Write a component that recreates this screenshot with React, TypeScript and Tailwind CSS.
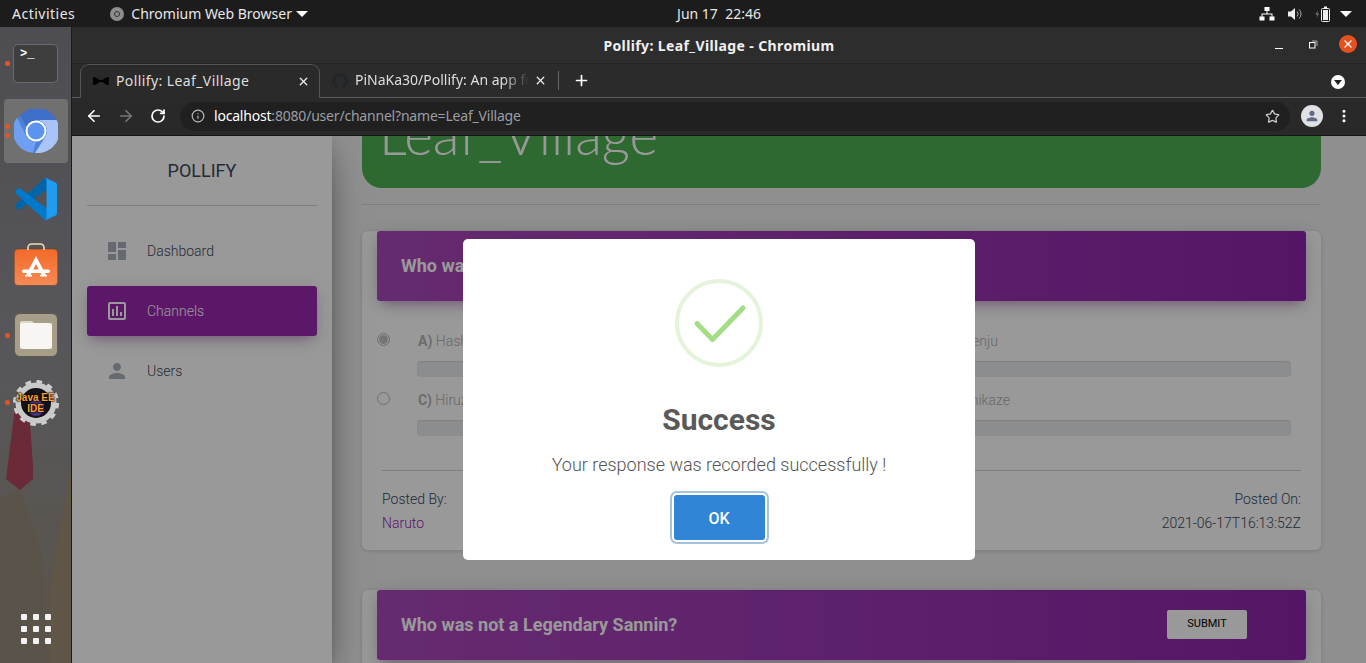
import { ArrowLeft, ArrowRight, Info, MoreVertical, Plus, RotateCw, Star, X } from "lucide-react";
import { FaGithub } from "react-icons/fa";
import type { ReactNode } from "react";

const CHROME_FONT = "font-['Noto_Sans',sans-serif]";

function TopBar() {
  return (
    <div className={`flex h-[27px] shrink-0 items-center bg-[#1c1c1c] text-[14px] text-[#e8e8e8] relative ${CHROME_FONT}`}>
      <span className="ml-[12px] tracking-[0.5px]">Activities</span>
      <span className="ml-[35px] flex h-[14px] w-[14px] items-center justify-center rounded-full bg-[#8d8d8d]">
        <span className="h-[6px] w-[6px] rounded-full border border-[#333]" />
      </span>
      <span className="ml-[7px]">Chromium Web Browser</span>
      <span className="ml-[4px] h-0 w-0 border-x-[6px] border-t-[6px] border-x-transparent border-t-white" />
      <span className="absolute left-1/2 -translate-x-1/2 pl-[72px] whitespace-pre">Jun 17  22:46</span>
      <div className="ml-auto mr-[14px] flex items-center">
        <svg width="16" height="14" viewBox="0 0 16 14" fill="white">
          <rect x="5.5" y="0" width="5" height="4" />
          <rect x="0.5" y="9.5" width="5" height="4" />
          <rect x="10.5" y="9.5" width="5" height="4" />
          <path d="M7.5 4h1v2.5h5V10h-1V7.5h-9V10h-1V6.5h5z" />
        </svg>
        <svg className="ml-[13px]" width="15" height="14" viewBox="0 0 15 14" fill="none">
          <path d="M0 4.5h3L7 1v12L3 9.5H0z" fill="#eee" />
          <path d="M9 4.5a3.5 3.5 0 0 1 0 5M11 2.5a6 6 0 0 1 0 9" stroke="#aaa" />
        </svg>
        <svg className="ml-[12px]" width="16" height="16" viewBox="0 0 16 16" fill="none">
          <path d="M3 4 0.5 8.5H2.5L1.5 12 4 7.5H2z" fill="#888" />
          <rect x="6.5" y="2.5" width="8" height="13" rx="1" stroke="#eee" />
          <rect x="8" y="4" width="5" height="10" fill="#eee" />
          <rect x="9" y="0.5" width="3" height="2" fill="#eee" />
        </svg>
        <span className="ml-[9px] h-0 w-0 border-x-[6px] border-t-[6px] border-x-transparent border-t-white" />
      </div>
    </div>
  );
}

function Dot({ top }: { top: string }) {
  return <span className={`absolute left-[5px] h-[5px] w-[5px] rounded-full bg-[#e95420] ${top}`} />;
}

function ChromiumLogo() {
  return (
    <svg width="44" height="44" viewBox="0 0 44 44">
      <circle cx="22" cy="22" r="22" fill="#4d82d8" />
      <path d="M22 11h20.5A22 22 0 0 0 6 6.8l8 13A11 11 0 0 1 22 11z" fill="#3f6fc9" />
      <path d="M22 33a11 11 0 0 1-9.5-5.5L3 8.8A22 22 0 0 0 19 43.8z" fill="#6e9ff0" />
      <path d="M22 11h20.5A22 22 0 0 1 21 44l10.5-16.5A11 11 0 0 0 22 11z" fill="#a9c5f7" />
      <circle cx="22" cy="22" r="10.5" fill="white" />
      <circle cx="22" cy="22" r="8.5" fill="#5b93ee" />
    </svg>
  );
}

function VsCodeLogo() {
  return (
    <svg width="42" height="42" viewBox="0 0 100 100">
      <path d="M96.46 10.8 75.86.9a6.23 6.23 0 0 0-7.1 1.2L1.3 63.7a4.16 4.16 0 0 0 0 6.2l5.5 5a4.16 4.16 0 0 0 5.3.2L93.4 13.5a4.13 4.13 0 0 1 6.6 3.3v-.2a6.25 6.25 0 0 0-3.54-5.8z" fill="#0065A9" />
      <path d="M96.46 89.2 75.86 99.1a6.23 6.23 0 0 1-7.1-1.2L1.3 36.3a4.16 4.16 0 0 1 0-6.2l5.5-5a4.16 4.16 0 0 1 5.3-.2l81.3 61.6a4.13 4.13 0 0 0 6.6-3.3v.2a6.25 6.25 0 0 1-3.54 5.8z" fill="#007ACC" />
      <path d="M75.86 99.1a6.23 6.23 0 0 1-7.1-1.2c2.3 2.3 6.24.67 6.24-2.6V4.7c0-3.27-3.94-4.9-6.24-2.6a6.23 6.23 0 0 1 7.1-1.2l20.6 9.9A6.25 6.25 0 0 1 100 16.4v67.2a6.25 6.25 0 0 1-3.54 5.6z" fill="#1F9CF0" />
    </svg>
  );
}

function SoftwareLogo() {
  return (
    <svg width="44" height="43" viewBox="0 0 44 43">
      <defs>
        <linearGradient id="sw" x1="0" y1="0" x2="0" y2="1">
          <stop offset="0" stopColor="#f26a2a" />
          <stop offset="1" stopColor="#f68a55" />
        </linearGradient>
      </defs>
      <rect x="0.25" y="6" width="43.5" height="36.5" rx="4" fill="url(#sw)" stroke="#5a3a2a" strokeWidth="0.5" />
      <path d="M14 7V4.5a3.5 3.5 0 0 1 3.5-3.5h9a3.5 3.5 0 0 1 3.5 3.5V7" fill="none" stroke="#efdcb0" strokeWidth="1.6" />
      <path d="M22 13 L12 32 H16.5 L22 21 L27.5 32 H32 Z" fill="white" />
      <rect x="8" y="26.5" width="28" height="3.5" rx="1.75" fill="white" />
      <rect x="11" y="32" width="7" height="1.5" fill="white" />
      <rect x="26" y="32" width="7" height="1.5" fill="white" />
    </svg>
  );
}

function FilesLogo() {
  return (
    <div className="flex h-[44px] w-[44px] items-center justify-center rounded-[6px] border border-[#5f5a4c] bg-[#a69e89]">
      <svg width="32" height="28" viewBox="0 0 32 28">
        <path d="M2 0h10l3 3H0V2a2 2 0 0 1 2-2z" fill="#dcd8cc" />
        <path d="M2 2h28a2 2 0 0 1 2 2v22a2 2 0 0 1-2 2H2a2 2 0 0 1-2-2V4a2 2 0 0 1 2-2z" fill="#f8f6f2" />
      </svg>
    </div>
  );
}

function EclipseLogo() {
  return (
    <div className="relative flex h-[46px] w-[46px] items-center justify-center">
      <svg className="absolute inset-0" width="46" height="46" viewBox="0 0 46 46">
        <circle cx="23" cy="23" r="21.5" fill="none" stroke="#cfcfcf" strokeWidth="3" strokeDasharray="5.6 5.65" />
        <circle cx="23" cy="23" r="17.5" fill="none" stroke="#c9c9c9" strokeWidth="6" />
        <circle cx="23" cy="23" r="15" fill="#141218" />
        <circle cx="23" cy="28" r="8" fill="#4a3580" />
      </svg>
      <span className="relative text-center text-[10px] leading-[11px] font-bold text-[#ffa030] [text-shadow:0_0_2px_#000,0_0_2px_#000,0_0_1px_#000] font-['Liberation_Sans',sans-serif] whitespace-nowrap">
        Java EE
        <br />
        IDE
      </span>
    </div>
  );
}

function Dock() {
  return (
    <div className="relative flex w-[72px] shrink-0 flex-col overflow-hidden border-r border-[#1a1a1a] bg-gradient-to-b from-[#4e4e52] via-[#57575b] to-[#5a5449] pt-[2px]">
      {/* wallpaper bits showing through the dock */}
      <svg className="absolute inset-0" width="71" height="636" viewBox="0 0 71 636">
        <path d="M15 380 L22 385 L29 380 L33 440 L33 452 L20 463 L6 452 Z" fill="#6a2a38" />
        <path d="M0 470 L20 463 L40 520 L50 636 L0 636 Z" fill="#5a5349" />
        <path d="M71 440 L50 560 L50 636 L71 636 Z" fill="#5f5648" />
      </svg>
      <div className="relative flex h-[68px] items-center justify-center">
        <Dot top="top-[32px]" />
        <div className="h-[39px] w-[45px] rounded-[5px] border border-[#6a6a6a] bg-[#3e3e3e] px-[6px] pt-[1px] font-['Liberation_Mono',monospace] text-[12px] leading-[16px] font-bold text-white">
          &gt;_
        </div>
      </div>
      <div className="relative flex h-[68px] items-center justify-center">
        <div className="flex h-[64px] w-[64px] items-center justify-center rounded-[4px] bg-[#707070]">
          <ChromiumLogo />
        </div>
        <Dot top="top-[27px]" />
        <Dot top="top-[36px]" />
      </div>
      <div className="relative flex h-[68px] items-center justify-center">
        <VsCodeLogo />
      </div>
      <div className="relative flex h-[68px] items-center justify-center pb-[5px]">
        <SoftwareLogo />
      </div>
      <div className="relative flex h-[68px] items-center justify-center">
        <Dot top="top-[32px]" />
        <FilesLogo />
      </div>
      <div className="relative flex h-[68px] items-center justify-center">
        <Dot top="top-[31px]" />
        <EclipseLogo />
      </div>
      <div className="relative mt-auto mb-[19px] grid w-fit grid-cols-3 gap-[6px] self-center">
        {Array.from({ length: 9 }).map((_, i) => (
          <span key={i} className="h-[6px] w-[6px] rounded-[1px] bg-[#f2f2f2]" />
        ))}
      </div>
    </div>
  );
}

function TitleBar() {
  return (
    <div className={`relative flex h-[37px] shrink-0 items-center justify-center border-b border-[#232323] bg-[#2d2d2d] text-[14px] font-bold tracking-[0.38px] text-[#f0f0f0] ${CHROME_FONT}`}>
      Pollify: Leaf_Village - Chromium
      <div className="absolute right-[9px] top-[8px] flex items-center">
        <span className="mt-[8px] h-[1px] w-[8px] bg-white" />
        <svg className="ml-[26px]" width="9" height="9" viewBox="0 0 9 9" fill="none" stroke="white">
          <rect x="0.5" y="2.5" width="5.5" height="5.5" />
          <path d="M3 1h5v5" stroke="#aaa" />
        </svg>
        <span className="ml-[21px] flex h-[18px] w-[18px] items-center justify-center rounded-full bg-[#e6501e]">
          <X size={12} color="white" strokeWidth={2.5} />
        </span>
      </div>
    </div>
  );
}

function TabStrip() {
  return (
    <div className={`flex h-[34px] shrink-0 items-end border-b border-[#5e5e5e] bg-[#2b2b2b] text-[14px] text-[#dedede] ${CHROME_FONT}`}>
      <div className="relative z-10 -mb-px ml-[8px] flex h-[34px] w-[240px] items-center rounded-t-[9px] border-x border-t border-b border-[#555] border-b-[#2a2a2a] bg-[#2a2a2a] pl-[12px]">
        <svg width="16" height="10" viewBox="0 0 16 10" fill="black">
          <path d="M0 1c3 0 5 2 6.5 3h3C11 3 13 1 16 1v8c-3 0-5-2-6.5-3h-3C5 7 3 9 0 9z" />
        </svg>
        <span className="ml-[7px] pb-[2px] tracking-[0.4px]">Pollify: Leaf_Village</span>
        <X className="absolute right-[9px] top-[10px]" size={13} color="#eee" strokeWidth={2.4} />
      </div>
      <div className="relative flex h-[33px] w-[239px] items-center pl-[12px]">
        <FaGithub size={16} color="#20262c" />
        <span className="ml-[7px] w-[174px] overflow-hidden pb-[2px] whitespace-nowrap [mask-image:linear-gradient(to_right,black_85%,transparent)]">
          PiNaKa30/Pollify: An app for
        </span>
        <X className="absolute right-[12px] top-[10px]" size={13} color="#eee" strokeWidth={2.4} />
        <span className="absolute right-0 top-[7px] h-[19px] w-px bg-[#666]" />
      </div>
      <div className="flex h-[33px] items-center pl-[14px]">
        <Plus size={17} color="white" strokeWidth={2.4} />
      </div>
      <span className="mb-[8px] ml-auto mr-[21px] flex h-[14px] w-[14px] items-center justify-center rounded-full bg-white">
        <span className="mt-[1px] h-0 w-0 border-x-[4px] border-t-[5px] border-x-transparent border-t-[#222]" />
      </span>
    </div>
  );
}

function Toolbar() {
  return (
    <div className={`flex h-[38px] shrink-0 items-center border-b border-[#151515] bg-[#292929] pb-[1px] text-[14px] ${CHROME_FONT}`}>
      <ArrowLeft className="ml-[13px]" size={18} color="white" strokeWidth={2.2} />
      <ArrowRight className="ml-[14px]" size={18} color="#777" strokeWidth={2.2} />
      <RotateCw className="ml-[15px]" size={16} color="white" strokeWidth={2.6} />
      <div className="ml-[14px] flex h-[29px] w-[1110px] items-center rounded-full bg-[#202020] pl-[11px]">
        <Info size={14} color="#bbb" />
        <span className="ml-[9px] pb-[2px] tracking-[-0.2px] text-white">localhost</span>
        <span className="pb-[2px] tracking-[-0.2px] text-[#9a9ea4]">:8080/user/channel?name=Leaf_Village</span>
        <Star className="ml-auto mr-[10px]" size={15} color="#ccc" strokeWidth={2} />
      </div>
      <span className="ml-[11px] flex h-[22px] w-[22px] items-center justify-center rounded-full bg-[#dfe1e5]">
        <svg width="16" height="16" viewBox="0 0 24 24" fill="#5f6b80">
          <path d="M12 12c2.21 0 4-1.79 4-4s-1.79-4-4-4-4 1.79-4 4 1.79 4 4 4zm0 2c-2.67 0-8 1.34-8 4v2h16v-2c0-2.66-5.33-4-8-4z" />
        </svg>
      </span>
      <MoreVertical className="ml-[13px]" size={16} color="white" strokeWidth={2.6} />
    </div>
  );
}

function NavItem({ label, active, path }: { label: string; active?: boolean; path: string }) {
  return (
    <div
      className={`mx-[15px] flex h-[50px] items-center rounded-[3px] pl-[18px] text-[14px] font-light ${
        active
          ? "bg-[#9c27b0] text-white shadow-[0_4px_20px_0_rgba(0,0,0,0.14),0_7px_10px_-5px_rgba(156,39,176,0.4)]"
          : "text-[#3c4858]"
      }`}
    >
      <svg width="24" height="24" viewBox="0 0 24 24" fill={active ? "white" : "#a9afbb"} fillRule="evenodd">
        <path d={path} />
      </svg>
      <span className="ml-[18px]">{label}</span>
    </div>
  );
}

function Sidebar() {
  return (
    <div className="relative z-10 w-[260px] shrink-0 bg-white shadow-[0_16px_38px_-12px_rgba(0,0,0,0.56),0_4px_25px_0_rgba(0,0,0,0.12),0_8px_10px_-5px_rgba(0,0,0,0.2)]">
      <div className="mx-[15px] flex h-[70px] items-center justify-center border-b border-[#d2d2d2] text-[18px] text-[#3c4858]">
        POLLIFY
      </div>
      <div className="mt-[20px] flex flex-col gap-[10px]">
        <NavItem label="Dashboard" path="M3 13h8V3H3v10zm0 8h8v-6H3v6zm10 0h8V11h-8v10zm0-18v6h8V3h-8z" />
        <NavItem
          label="Channels"
          active
          path="M19 3H5c-1.1 0-2 .9-2 2v14c0 1.1.9 2 2 2h14c1.1 0 2-.9 2-2V5c0-1.1-.9-2-2-2zm0 16H5V5h14v14zM7 10h2v7H7zm4-3h2v10h-2zm4 6h2v4h-2z"
        />
        <NavItem label="Users" path="M12 12c2.21 0 4-1.79 4-4s-1.79-4-4-4-4 1.79-4 4 1.79 4 4 4zm0 2c-2.67 0-8 1.34-8 4v2h16v-2c0-2.66-5.33-4-8-4z" />
      </div>
    </div>
  );
}

function PollOption({ letter, name, checked }: { letter: string; name: string; checked?: boolean }) {
  return (
    <div className="flex">
      <span className="mt-[2px] flex h-[13px] w-[13px] shrink-0 items-center justify-center rounded-full border border-[#b8b8b8]">
        {checked && <span className="h-[9px] w-[9px] rounded-full bg-[#c4c4c4]" />}
      </span>
      <div className="ml-[27px] flex-1">
        <p className="h-[21px] pl-[1px] text-[14px] leading-[21px] font-light text-[#adadad]">
          <b className="font-bold text-[#b4b4b4]">{letter})</b> {name}
        </p>
        <div className="mt-[9px] h-[16px] rounded-[4px] bg-[#e9ecef] shadow-[inset_0_1px_2px_rgba(0,0,0,0.1)]" />
      </div>
    </div>
  );
}

function CardHeader({ title, children }: { title: string; children?: ReactNode }) {
  return (
    <div className="mx-[15px] -mt-[20px] flex h-[70px] items-center justify-between rounded-[3px] bg-gradient-to-r from-[#ab47bc] to-[#8e24aa] pl-[24px] shadow-[0_4px_20px_0_rgba(0,0,0,0.14),0_7px_10px_-5px_rgba(156,39,176,0.4)]">
      <h4 className="pb-[2px] text-[18px] font-bold text-white">{title}</h4>
      {children}
    </div>
  );
}

function PollCard() {
  return (
    <div className="mt-[46px] rounded-[6px] bg-white shadow-[0_1px_4px_0_rgba(0,0,0,0.14)]">
      <CardHeader title="Who was the First Hokage?" />
      <div className="grid grid-cols-2 gap-x-[20px] gap-y-[13px] pl-[15px] pr-[30px] pt-[30px]">
        <PollOption letter="A" name="Hashirama Senju" checked />
        <PollOption letter="B" name="Tobirama Senju" />
        <PollOption letter="C" name="Hiruzen Sarutobi" />
        <PollOption letter="D" name="Minato Namikaze" />
      </div>
      <div className="mx-[20px] mt-[34px] flex h-[80px] justify-between border-t border-[#d2d2d2] pt-[16px] text-[14px] leading-[24px] font-light text-[#3c4858]">
        <div>
          <p>Posted By:</p>
          <p className="text-[#9c27b0]">Naruto</p>
        </div>
        <div className="text-right">
          <p>Posted On:</p>
          <p>2021-06-17T16:13:52Z</p>
        </div>
      </div>
    </div>
  );
}

function SuccessModal() {
  return (
    <div className="absolute inset-0 z-20 flex items-center justify-center bg-black/40">
      <div className="flex h-[321px] w-[512px] flex-col items-center rounded-[5px] bg-white pt-[40px]">
        <svg width="88" height="88" viewBox="0 0 88 88" fill="none">
          <circle cx="44" cy="44" r="42" stroke="#a5dc86" strokeOpacity="0.3" strokeWidth="4" />
          <path d="M22 44.5L37.5 60.5L68 29" stroke="#a5dc86" strokeWidth="5" strokeLinecap="round" strokeLinejoin="round" />
        </svg>
        <h2 className="mt-[33px] text-[30px] leading-[40px] font-bold text-[#595959]">Success</h2>
        <p className="mt-[15px] text-[18px] leading-[20px] font-light text-[#545454]">
          Your response was recorded successfully !
        </p>
        <button className="mt-[20px] h-[45px] w-[91px] rounded-[3px] bg-[#3085d6] pt-[2px] text-[16px] font-medium text-white shadow-[0_0_0_2px_#fff,0_0_0_4px_#a9c1da]">
          OK
        </button>
      </div>
    </div>
  );
}

function Page() {
  return (
    <div className="relative flex min-h-0 flex-1 overflow-hidden bg-[#eeeeee] font-['Roboto',sans-serif]">
      <Sidebar />
      <div className="min-w-0 flex-1 pl-[30px] pr-[45px]">
        <div className="flex h-[52px] items-end overflow-hidden rounded-b-[20px] bg-[#4caf50] pl-[17px]">
          <span className="pb-[26px] font-['Lato',sans-serif] text-[55px] leading-[55px] font-light whitespace-nowrap text-white">
            Leaf_Village
          </span>
        </div>
        <div className="mt-[16px] border-t border-[#d2d2d2]" />
        <PollCard />
        <div className="mt-[60px] h-[100px] rounded-[6px] bg-white shadow-[0_1px_4px_0_rgba(0,0,0,0.14)]">
          <CardHeader title="Who was not a Legendary Sannin?">
            <button className="mr-[59px] mb-[1px] h-[29px] w-[80px] rounded-[2px] bg-white text-[11px] text-black">SUBMIT</button>
          </CardHeader>
        </div>
      </div>
      <SuccessModal />
    </div>
  );
}

export default function App() {
  return (
    <div className="flex h-[663px] w-[1366px] flex-col overflow-hidden bg-[#292929]">
      <TopBar />
      <div className="flex min-h-0 flex-1">
        <Dock />
        <div className="flex min-w-0 flex-1 flex-col">
          <TitleBar />
          <TabStrip />
          <Toolbar />
          <Page />
        </div>
      </div>
    </div>
  );
}
